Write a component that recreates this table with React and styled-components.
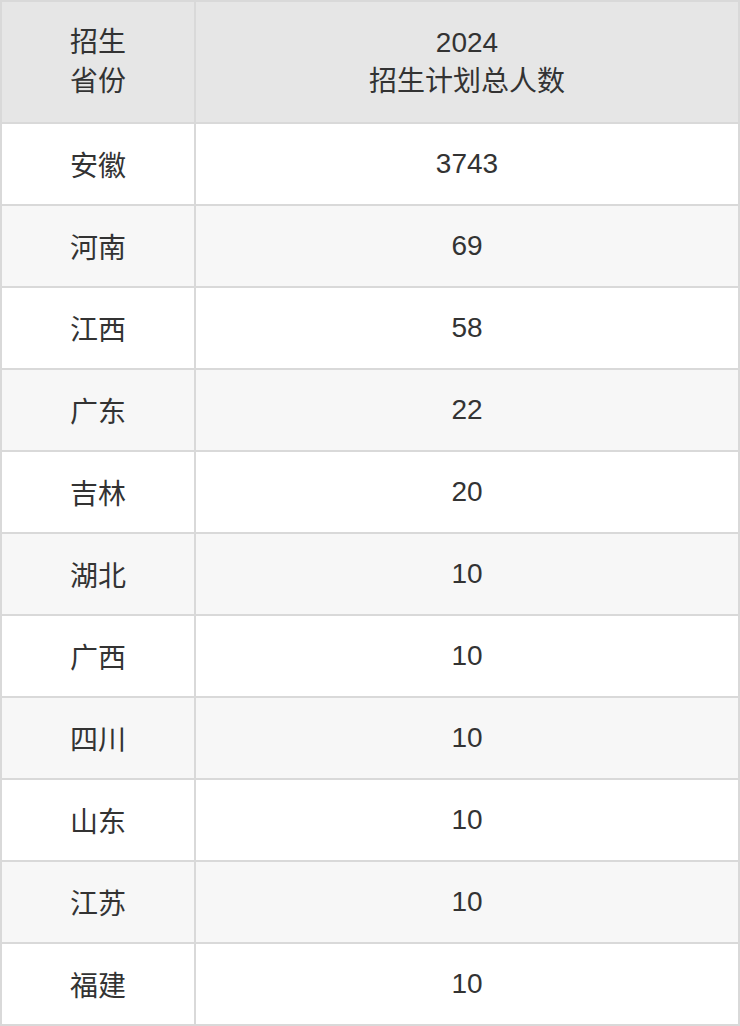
import React from 'react'
import styled, {createGlobalStyle} from 'styled-components'

const rows = [
    ['安徽', '3743'],
    ['河南', '69'],
    ['江西', '58'],
    ['广东', '22'],
    ['吉林', '20'],
    ['湖北', '10'],
    ['广西', '10'],
    ['四川', '10'],
    ['山东', '10'],
    ['江苏', '10'],
    ['福建', '10'],
]

const App = () => {
    return (
        <>
            <GlobalStyle/>
            <Table>
                <Row>
                    <HeadCell>招生<br/>省份</HeadCell>
                    <HeadCell>2024<br/>招生计划总人数</HeadCell>
                </Row>
                {rows.map(([province, count], i) => (
                    <Row key={province + i}>
                        <Cell striped={i % 2 === 1}>{province}</Cell>
                        <Cell striped={i % 2 === 1}>{count}</Cell>
                    </Row>
                ))}
            </Table>
        </>
    )
}

export default App

const GlobalStyle = createGlobalStyle`
    body {
        margin: 0;
        background: #fff;
        font-family: "Liberation Sans", "Noto Sans CJK SC", sans-serif;
    }
`;

const Table = styled.div`
    width: 740px;
    box-sizing: border-box;
    padding: 2px;
    display: flex;
    flex-direction: column;
    gap: 2px;
    background: #d9d9d9;
`;

const Row = styled.div`
    display: grid;
    grid-template-columns: 192px 1fr;
    gap: 2px;
`;

const HeadCell = styled.div`
    height: 120px;
    background: #e6e6e6;
    color: #333;
    font-size: 28px;
    line-height: 39px;
    display: flex;
    align-items: center;
    justify-content: center;
    text-align: center;
`;

const Cell = styled.div`
    height: 80px;
    background: ${p => p.striped ? '#f7f7f7' : '#fff'};
    color: #333;
    font-size: 28px;
    display: flex;
    align-items: center;
    justify-content: center;
`;
